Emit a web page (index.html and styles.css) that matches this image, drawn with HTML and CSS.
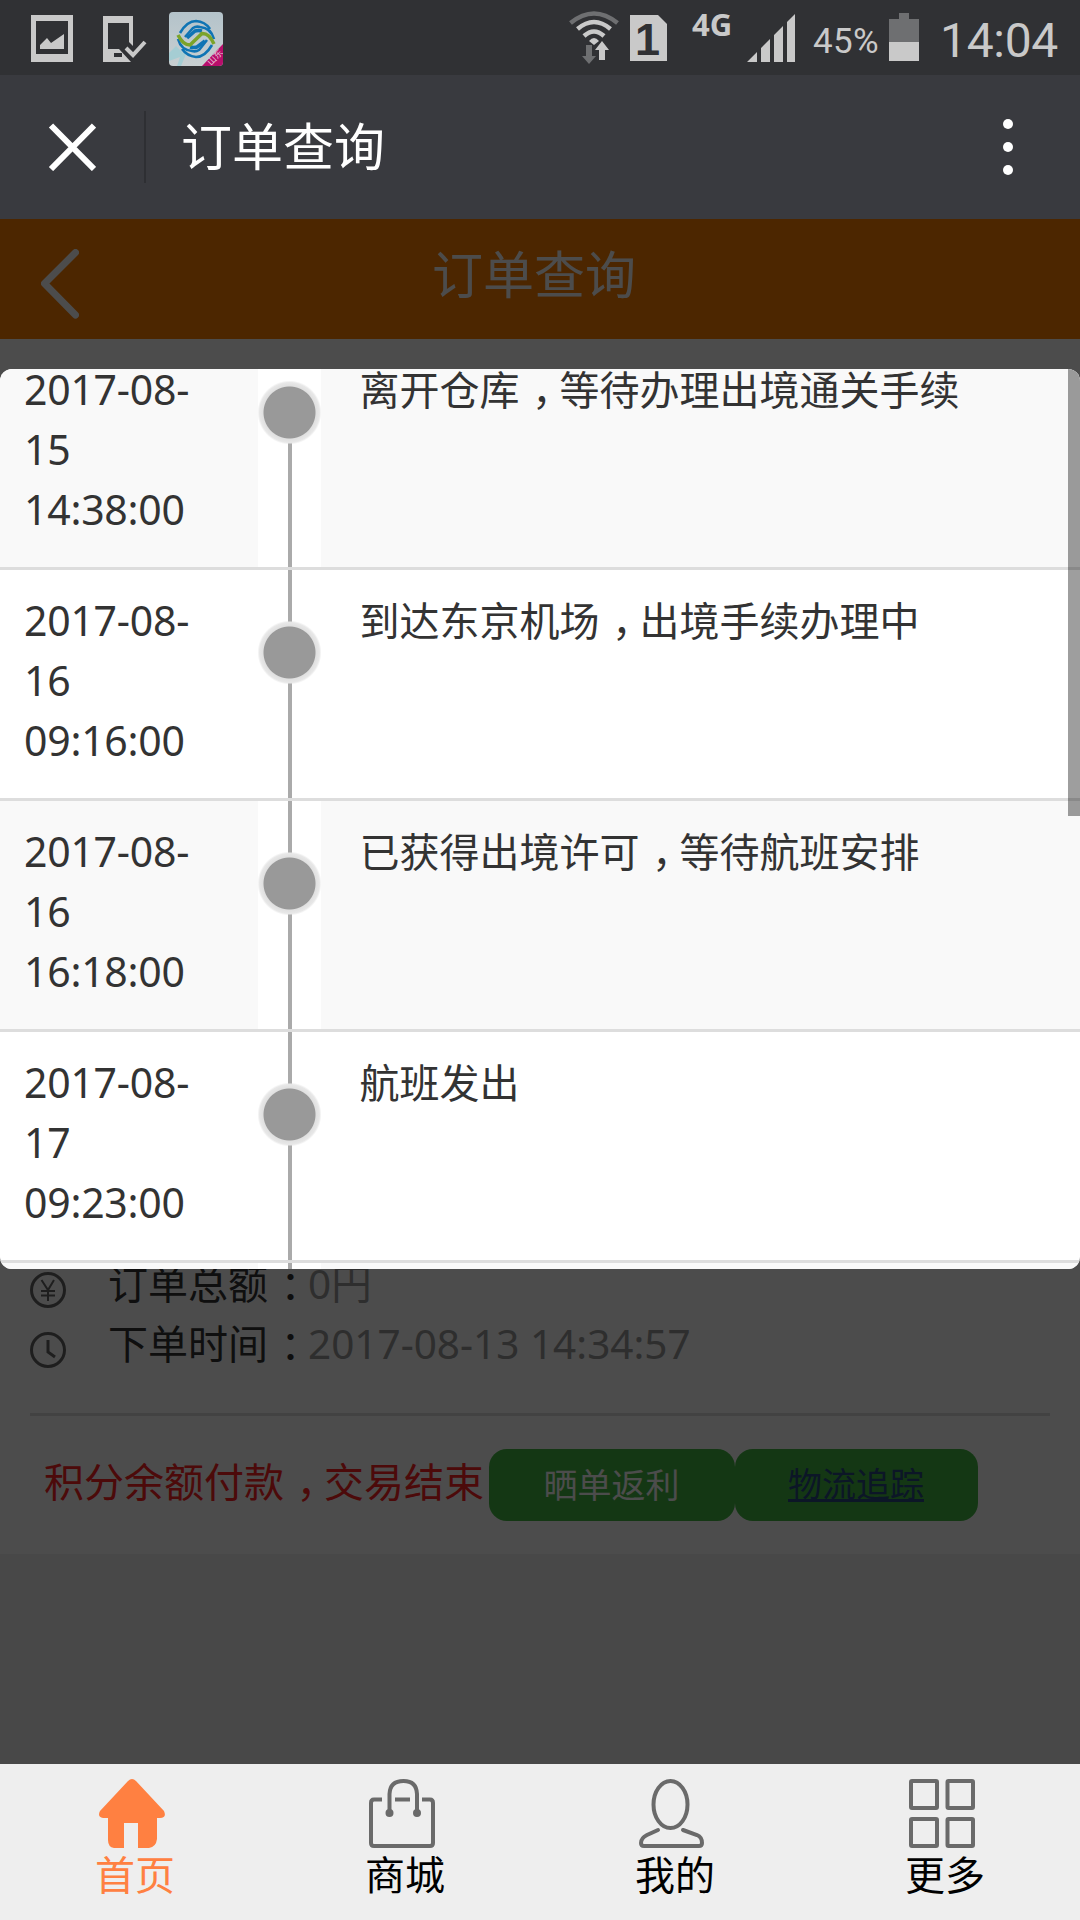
FILE: index.html
```html
<!DOCTYPE html>
<html lang="zh-CN">
<head>
  <meta charset="UTF-8">
  <meta name="viewport" content="width=device-width, initial-scale=1.0">
  <title>订单查询</title>
  <link rel="stylesheet" href="styles.css">
</head>
<body>
  <div class="status-bar">
    <svg class="st-photo" width="42" height="47" viewBox="0 0 42 47">
      <path fill="#c9c9c9" fill-rule="evenodd" d="M0 0H42V47H0ZM5 6V39H37V6Z"/>
      <path fill="#c9c9c9" d="M9 34V30L16 23L20 28L33 19V34Z"/>
    </svg>
    <svg class="st-phone" width="44" height="46" viewBox="0 0 44 46">
      <path fill="#c9c9c9" fill-rule="evenodd" d="M0 0H30V30L26 26V7H5V33H16L28 46H0ZM11 37V41H19V37Z"/>
      <path fill="none" stroke="#c9c9c9" stroke-width="4" d="M23 32L30 39L42 26"/>
    </svg>
    <svg class="st-app" width="54" height="54" viewBox="0 0 54 54">
      <defs>
        <linearGradient id="sky" x1="0" y1="0" x2="0" y2="1">
          <stop offset="0" stop-color="#b4c3ca"/>
          <stop offset="1" stop-color="#c8cfd1"/>
        </linearGradient>
        <clipPath id="round"><rect width="54" height="54" rx="4"/></clipPath>
      </defs>
      <g clip-path="url(#round)">
        <rect width="54" height="54" fill="url(#sky)"/>
        <path fill="#a5cdd3" d="M0 41L7 34L14 41L20 35L12 54H8L11 45L0 49Z"/>
        <path fill="none" stroke="#0f74b4" stroke-width="2.600" d="M11 21Q18 9 27 9Q36 9.500 41 17M16 25L24 16Q27 14 31 15Q42 16 45 27M43 33Q36 45 27 45Q18 44 13 37M38 28L30 38Q27 40 23 39Q12 38 9 27"/>
        <path fill="none" stroke="#0f74b4" stroke-width="3.500" d="M18 26L26 19Q29 18 33 19M36 29L28 35Q25 36 21 35"/>
        <path fill="none" stroke="#7ba32a" stroke-width="3.500" d="M9 23Q14 33 21 33L33 21.500Q40 21 45 32"/>
        <path fill="#b80e6c" d="M54 32V54H33Z"/>
        <text class="app-tag" x="42" y="54" transform="rotate(-46 42 54)">山东</text>
      </g>
    </svg>
    <svg class="st-wifi" width="50" height="54" viewBox="0 0 50 54">
      <g fill="none" stroke-width="4.500">
        <path stroke="#6e6f71" d="M1.500 12Q25-7 48.500 12"/>
        <path stroke="#c9c9c9" d="M8.500 18Q25 4 41.500 18M15 25Q25 16 35 25"/>
      </g>
      <path fill="#c9c9c9" d="M20 30Q25 24 30 30L25 34Z"/>
      <path fill="#6e6f71" d="M17 34H23V45H27L20 53L13 45H17Z"/>
      <path fill="#c9c9c9" d="M33 30L40 39H36V49H30V39H26Z"/>
    </svg>
    <svg class="st-sim" width="37" height="46" viewBox="0 0 37 46">
      <path fill="#c9c9c9" d="M0 0H28L37 9V46H0Z"/>
      <text class="sim-no" x="17.500" y="40">1</text>
    </svg>
    <span class="st-net">4G</span>
    <svg class="st-signal" width="48" height="48" viewBox="0 0 48 48">
      <path fill="#c9c9c9" d="M0 48L10 38V48ZM14 34L23 25V48H14ZM27 21L36 12V48H27ZM40 8L48 0V48H40Z"/>
    </svg>
    <span class="st-percent">45%</span>
    <svg class="st-battery" width="30" height="48" viewBox="0 0 30 48">
      <path fill="#6e6f71" d="M10 0H20V6H30V29H0V6H10Z"/>
      <path fill="#c9c9c9" d="M0 29H30V48H0Z"/>
    </svg>
    <span class="st-time">14:04</span>
  </div>

  <div class="app-bar">
    <svg class="close" width="48" height="48" viewBox="0 0 48 48">
      <path stroke="#fff" stroke-width="6" d="M3 2.500L46 46M46 2.500L3 46"/>
    </svg>
    <h1 class="app-title">订单查询</h1>
    <svg class="dots" width="10" height="56" viewBox="0 0 10 56">
      <circle cx="5" cy="5" r="5" fill="#fff"/>
      <circle cx="5" cy="28" r="5" fill="#fff"/>
      <circle cx="5" cy="51" r="5" fill="#fff"/>
    </svg>
  </div>

  <div class="page">
    <div class="page-header">
      <svg class="back" width="38" height="70" viewBox="0 0 38 70">
        <path fill="none" stroke="#fff" stroke-width="7" stroke-linecap="round" stroke-linejoin="round" d="M34.500 3.500L3.500 34.500L34.500 66"/>
      </svg>
      <h2>订单查询</h2>
    </div>

    <div class="order">
      <div class="order-line">
        <svg width="36" height="36" viewBox="0 0 36 36" fill="none" stroke="#666" stroke-width="3">
          <circle cx="18" cy="18" r="16.500"/>
          <path stroke-width="2" d="M11.500 8L18 18L24 8M18 18V29M11 19H25M11 23.500H25"/>
        </svg>
        <span class="label">订单总额<i class="punct">：</i></span>
        <span class="value">0円</span>
      </div>
      <div class="order-line">
        <svg width="36" height="36" viewBox="0 0 36 36" fill="none" stroke="#666" stroke-width="3">
          <circle cx="18" cy="18" r="16.500"/>
          <path d="M18 8V20L25 25"/>
        </svg>
        <span class="label">下单时间<i class="punct">：</i></span>
        <span class="value">2017-08-13 14:34:57</span>
      </div>
      <div class="order-foot">
        <span class="state">积分余额付款<i class="punct">，</i>交易结束</span>
        <button class="btn btn-share">晒单返利</button>
        <a class="btn btn-track" href="#">物流追踪</a>
      </div>
    </div>

    <div class="mask"></div>

    <div class="track">
      <div class="track-row first">
        <div class="date">2017-08-<br>15<br>14:38:00</div>
        <div class="node"></div>
        <div class="text">离开仓库<i class="punct">，</i>等待办理出境通关手续</div>
      </div>
      <div class="track-row">
        <div class="date">2017-08-<br>16<br>09:16:00</div>
        <div class="node"></div>
        <div class="text">到达东京机场<i class="punct">，</i>出境手续办理中</div>
      </div>
      <div class="track-row">
        <div class="date">2017-08-<br>16<br>16:18:00</div>
        <div class="node"></div>
        <div class="text">已获得出境许可<i class="punct">，</i>等待航班安排</div>
      </div>
      <div class="track-row">
        <div class="date">2017-08-<br>17<br>09:23:00</div>
        <div class="node"></div>
        <div class="text">航班发出</div>
      </div>
      <div class="track-row rest">
        <div class="date"></div>
        <div class="node"></div>
        <div class="text"></div>
      </div>
      <div class="scrollbar"></div>
    </div>
  </div>

  <div class="tab-bar">
    <a class="tab active">
      <svg width="66" height="69" viewBox="0 0 66 69">
        <path fill="#ff8041" d="M29 2Q33-2 37 2L65 32Q68 39 61 39H58V60Q57 68 50 69H39V44H25V69H15Q9 68 9 61V39H4Q-2 38 1 32Z"/>
      </svg>
      <span>首页</span>
    </a>
    <a class="tab">
      <svg width="66" height="69" viewBox="0 0 66 69" fill="none" stroke="#6a6a6a" stroke-width="4">
        <path d="M13 20.500H5Q2 20.500 2 24V64Q2 67 5 67H61Q64 67 64 64V24Q64 20.500 61 20.500H53M26 20.500H41"/>
        <path d="M20.500 33V15Q21 2 34.500 2Q47.500 2 48 15V33"/>
        <circle cx="20.500" cy="34" r="2"/>
        <circle cx="48" cy="34" r="2"/>
      </svg>
      <span>商城</span>
    </a>
    <a class="tab">
      <svg width="66" height="69" viewBox="0 0 66 69" fill="none" stroke="#6a6a6a" stroke-width="4">
        <ellipse cx="31.500" cy="25.500" rx="17" ry="23.500"/>
        <path stroke-linecap="round" d="M19 51L8 56Q2 59 2 64Q2 67 5 67H60Q63 67 63 64Q63 58 58 56L44 51"/>
      </svg>
      <span>我的</span>
    </a>
    <a class="tab">
      <svg width="66" height="69" viewBox="0 0 66 69" fill="none" stroke="#6a6a6a" stroke-width="4">
        <rect x="2" y="2" width="26" height="27" rx="1"/>
        <rect x="38.500" y="2" width="25.500" height="27" rx="1"/>
        <rect x="2" y="40" width="26" height="27" rx="1"/>
        <rect x="38.500" y="40" width="25.500" height="27" rx="1"/>
      </svg>
      <span>更多</span>
    </a>
  </div>
</body>
</html>
```
FILE: styles.css
```css
* {
  box-sizing: border-box;
}
body {
  margin: 0;
  width: 1080px;
  height: 1920px;
  overflow: hidden;
  display: flex;
  flex-direction: column;
  font-family: "Noto Sans", "Noto Sans CJK SC", sans-serif;
  font-size: 40px;
  background: #484848;
}
h1, h2 {
  margin: 0;
  font-weight: 400;
}
svg {
  display: block;
  flex: none;
}

/* system status bar */
.status-bar {
  height: 75px;
  display: flex;
  align-items: flex-start;
  background: #303134;
  color: #c9c9c9;
  font-family: Roboto, sans-serif;
  line-height: 1;
  white-space: nowrap;
}
.st-photo { margin: 15px 0 0 31px; }
.st-phone { margin: 16px 0 0 30px; }
.st-app { margin: 12px 0 0 22px; }
.app-tag {
  font-family: "Noto Sans CJK SC", sans-serif;
  font-size: 9px;
  fill: #e8c5d8;
}
.st-wifi { margin: 11px 0 0 346px; }
.st-sim { margin: 15px 0 0 11px; }
.sim-no {
  font-family: "Liberation Sans", sans-serif;
  font-weight: 700;
  font-size: 45px;
  text-anchor: middle;
  fill: #303134;
}
.st-net {
  width: 55px;
  margin: 9px 0 0 25px;
  font-family: "Noto Sans", sans-serif;
  font-weight: 700;
  font-size: 31px;
}
.st-signal { margin: 14px 0 0 0; }
.st-percent {
  width: 76px;
  margin: 24px 0 0 18px;
  font-size: 35px;
  letter-spacing: 0.3px;
}
.st-battery { margin: 13px 0 0 0; }
.st-time {
  margin: 17px 0 0 21px;
  font-size: 48px;
  letter-spacing: -0.3px;
}

.app-bar {
  height: 144px;
  display: flex;
  align-items: center;
  padding: 0 67px 0 48px;
  background: #393a3f;
  color: #fff;
}
.app-title {
  height: 72px;
  margin-left: 48px;
  padding-left: 35px;
  border-left: 2px solid #2e2f33;
  font-size: 51px;
  line-height: 71px;
}
.dots {
  margin-left: auto;
}

.page {
  position: relative;
  height: 1545px;
  background: #f0f0f0;
}
.page-header {
  height: 120px;
  display: flex;
  align-items: center;
  padding-left: 41px;
  background: #ff8000;
  color: #fff;
}
.page-header .back {
  margin-top: 9px;
}
.page-header h2 {
  margin-left: 353px;
  margin-top: -10px;
  font-size: 51px;
  line-height: 60px;
}

.order {
  height: 1215px;
  padding: 916px 30px 0;
  background: #fff;
}
.order-line {
  height: 60px;
  display: flex;
  align-items: flex-start;
  line-height: 58px;
  white-space: nowrap;
}
.order-line svg {
  margin: 17px 42px 0 0;
}
.label {
  width: 200px;
  color: #333;
}
.value {
  color: #999;
  font-size: 40.5px;
}
.order-foot {
  height: 111px;
  margin-top: 38px;
  padding: 33px 0 0 14px;
  border-top: 3px solid #dcdcdc;
  display: flex;
  line-height: 66px;
  white-space: nowrap;
}
.state {
  width: 445px;
  color: #ff2222;
}
.btn {
  width: 246px;
  height: 72px;
  padding: 0 1px 0 0;
  border: none;
  border-radius: 18px;
  background: #43b843;
  color: #fff;
  font-family: inherit;
  font-size: 34px;
  line-height: 70px;
  text-align: center;
}
.btn-track {
  width: 243px;
  color: #284a82;
}
/* full-width punctuation sits in the middle of its cell */
.punct {
  font-style: normal;
  padding-left: 0.31em;
  margin-right: -0.31em;
}

.mask {
  position: absolute;
  inset: 0;
  background: rgba(0, 0, 0, 0.7);
}

/* delivery tracking popup */
.track {
  position: absolute;
  top: 150px;
  left: 0;
  width: 1080px;
  height: 900px;
  overflow: hidden;
  border-radius: 12px;
  background: #fff;
  color: #333;
}
.track-row {
  height: 231px;
  display: flex;
  border-bottom: 3px solid #ddd;
  line-height: 60px;
}
.track-row:nth-child(odd) {
  background: #f9f9f9;
}
.track-row.first {
  margin-top: -30px;
}
.date {
  width: 258px;
  padding: 20px 0 0 24px;
  font-size: 41px;
  letter-spacing: -0.25px;
}
.node {
  width: 63px;
  background:
    radial-gradient(circle at 31.5px 82.5px, #999 25.5px, #e0e0e0 26.5px, #e8e8e8 30px, transparent 32px),
    linear-gradient(#aaa, #aaa) 30px 0 / 4px 100% no-repeat #fff;
}
.first .node {
  background:
    radial-gradient(circle at 31.5px 73.5px, #999 25.5px, #e0e0e0 26.5px, #e8e8e8 30px, transparent 32px),
    linear-gradient(#aaa, #aaa) 30px 73px / 4px 100% no-repeat #fff;
}
.rest .node {
  background: linear-gradient(#aaa, #aaa) 30px 0 / 4px 100% no-repeat #fff;
}
.text {
  flex: 1;
  padding: 21px 0 0 38.5px;
}
.scrollbar {
  position: absolute;
  top: 0;
  right: 0;
  width: 12px;
  height: 447px;
  background: rgba(0, 0, 0, 0.38);
}

.tab-bar {
  height: 156px;
  display: flex;
  background: #eee;
}
.tab {
  width: 270px;
  padding-top: 15px;
  color: #000;
  text-align: center;
  line-height: 54px;
}
.tab svg {
  margin: 0 0 0 99px;
}
.tab span {
  display: block;
}
.tab.active {
  color: #ff8041;
}
```
